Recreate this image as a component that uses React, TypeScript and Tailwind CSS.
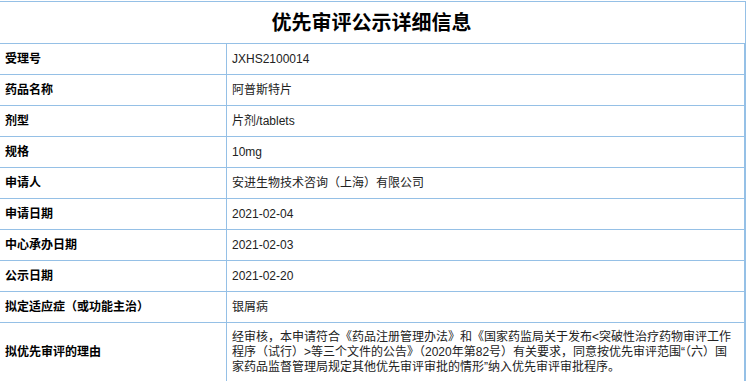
import React from "react";

const rows: { label: string; value: React.ReactNode }[] = [
  { label: "受理号", value: "JXHS2100014" },
  { label: "药品名称", value: "阿普斯特片" },
  { label: "剂型", value: "片剂/tablets" },
  { label: "规格", value: "10mg" },
  { label: "申请人", value: "安进生物技术咨询（上海）有限公司" },
  { label: "申请日期", value: "2021-02-04" },
  { label: "中心承办日期", value: "2021-02-03" },
  { label: "公示日期", value: "2021-02-20" },
  { label: "拟定适应症（或功能主治）", value: "银屑病" },
];

export default function App() {
  return (
    <div
      className="w-[747px] h-[381px] overflow-hidden bg-white pt-[1px]"
      style={{ fontFamily: '"Liberation Sans", Arial, "Noto Sans CJK SC", sans-serif' }}
    >
      <div className="ml-[-2px] w-[748px] border-t border-r border-[#95c0e6]">
        <div className="h-[42px] border-b border-[#95c0e6] flex items-center justify-center text-[20px] font-bold text-black leading-none">
          优先审评公示详细信息
        </div>
        {rows.map((r) => (
          <div key={r.label} className="flex h-[31px] border-b border-[#95c0e6]">
            <div className="w-[229px] shrink-0 border-r border-[#95c0e6] pl-[7px] flex items-center text-[12px] font-bold text-black">
              {r.label}
            </div>
            <div className="w-[518px] shrink-0 border-r border-[#95c0e6] pl-[5px] flex items-center text-[12px] text-[#222]">
              {r.value}
            </div>
          </div>
        ))}
        <div className="flex h-[59px] border-b border-[#95c0e6]">
          <div className="w-[229px] shrink-0 border-r border-[#95c0e6] pl-[7px] flex items-center text-[12px] font-bold text-black">
            拟优先审评的理由
          </div>
          <div className="w-[518px] shrink-0 border-r border-[#95c0e6] pl-[5px] flex items-center text-[12px] leading-[15px] text-[#222] whitespace-nowrap">
            <div>
              经审核，本申请符合《药品注册管理办法》和《国家药监局关于发布&lt;突破性治疗药物审评工作
              <br />
              程序（试行）&gt;等三个文件的公告》（2020年第82号）有关要求，同意按优先审评范围“（六）国
              <br />
              家药品监督管理局规定其他优先审评审批的情形”纳入优先审评审批程序。
            </div>
          </div>
        </div>
      </div>
    </div>
  );
}
